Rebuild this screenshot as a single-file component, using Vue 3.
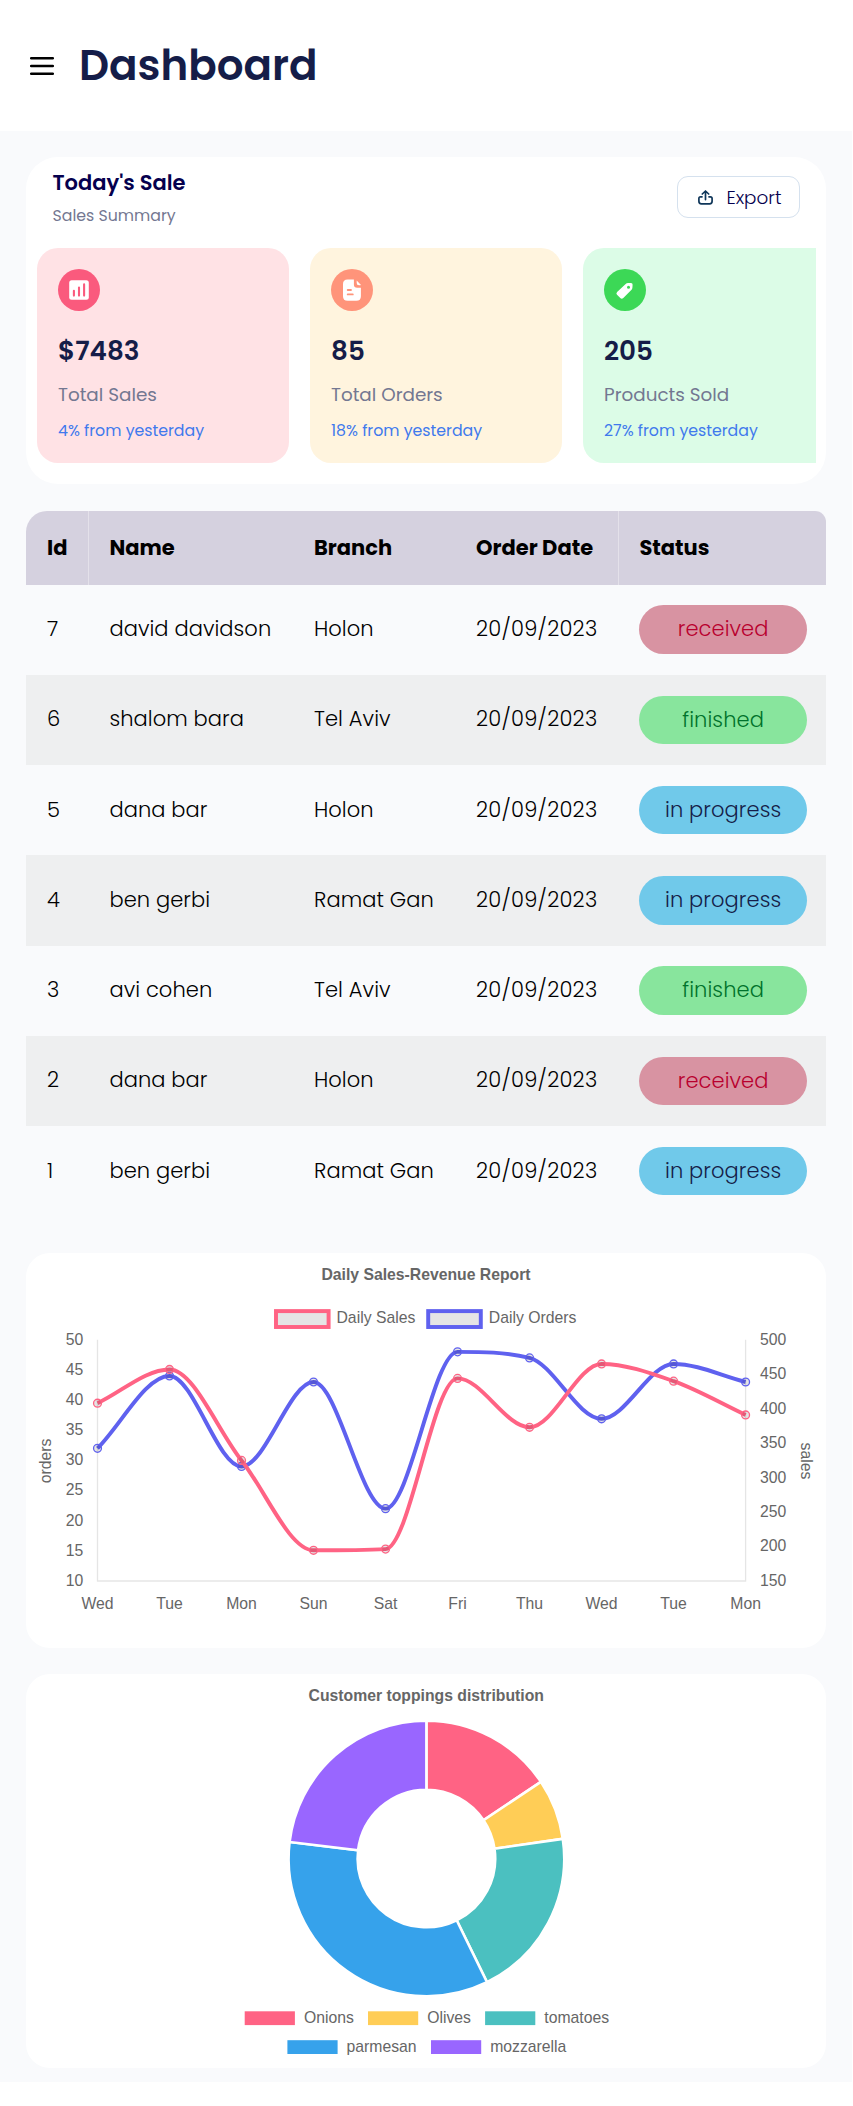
<script setup>
const stats = [
  { kind: 'sales', value: '$7483', label: 'Total Sales', note: '4% from yesterday' },
  { kind: 'orders', value: '85', label: 'Total Orders', note: '18% from yesterday' },
  { kind: 'sold', value: '205', label: 'Products Sold', note: '27% from yesterday' },
]

const rows = [
  [7, 'david davidson', 'Holon', 'received'],
  [6, 'shalom bara', 'Tel Aviv', 'finished'],
  [5, 'dana bar', 'Holon', 'in progress'],
  [4, 'ben gerbi', 'Ramat Gan', 'in progress'],
  [3, 'avi cohen', 'Tel Aviv', 'finished'],
  [2, 'dana bar', 'Holon', 'received'],
  [1, 'ben gerbi', 'Ramat Gan', 'in progress'],
]

// Line chart geometry, in the card's own pixels
const left = 71.5
const right = 719.6
const top = 86.8
const bottom = 328
const step = (right - left) / 9
const days = ['Wed', 'Tue', 'Mon', 'Sun', 'Sat', 'Fri', 'Thu', 'Wed', 'Tue', 'Mon']
const orderTicks = [50, 45, 40, 35, 30, 25, 20, 15, 10]
const salesTicks = [500, 450, 400, 350, 300, 250, 200, 150]
const scale = (v, min, max) => bottom - ((v - min) / (max - min)) * (bottom - top)
const toPoints = (values, min, max) => values.map((v, i) => ({ x: left + i * step, y: scale(v, min, max) }))

// Monotone cubic interpolation through the points
function curve(p) {
  const n = p.length
  const d = []
  for (let i = 0; i < n - 1; i++) d.push((p[i + 1].y - p[i].y) / step)
  const m = p.map((_, i) => {
    if (i === 0) return d[0]
    if (i === n - 1) return d[n - 2]
    return d[i - 1] * d[i] <= 0 ? 0 : (d[i - 1] + d[i]) / 2
  })
  for (let i = 0; i < n - 1; i++) {
    if (d[i] === 0) {
      m[i] = m[i + 1] = 0
      continue
    }
    const a = m[i] / d[i]
    const b = m[i + 1] / d[i]
    const s = a * a + b * b
    if (s > 9) {
      const t = 3 / Math.sqrt(s)
      m[i] = a * t * d[i]
      m[i + 1] = b * t * d[i]
    }
  }
  const h = step / 3
  let out = `M${p[0].x} ${p[0].y}`
  for (let i = 0; i < n - 1; i++) {
    out += `C${p[i].x + h} ${p[i].y + m[i] * h} ${p[i + 1].x - h} ${p[i + 1].y - m[i + 1] * h} ${p[i + 1].x} ${p[i + 1].y}`
  }
  return out
}

const series = [
  { color: '#5f61ef', points: toPoints([32, 44, 29, 43, 22, 48, 47, 36.9, 46, 43], 10, 50) },
  { color: '#ff6384', points: toPoints([408, 457, 325, 194.5, 196.3, 444, 373, 465, 440, 391], 150, 500) },
].map((s) => ({ ...s, d: curve(s.points) }))

const cx = 400.4
const cy = 184.5
function slice(from, to) {
  const at = (deg, r) => {
    const t = (deg * Math.PI) / 180
    return `${cx + r * Math.sin(t)} ${cy - r * Math.cos(t)}`
  }
  const R = 137.8
  const r = 68.8
  return `M${at(from, R)}A${R} ${R} 0 0 1 ${at(to, R)}L${at(to, r)}A${r} ${r} 0 0 0 ${at(from, r)}Z`
}
const slices = [
  { color: '#ff6384', d: slice(0, 56.2) },
  { color: '#ffcd56', d: slice(56.2, 81.8) },
  { color: '#4bc0c0', d: slice(81.8, 153.9) },
  { color: '#36a2eb', d: slice(153.9, 276.9) },
  { color: '#9966ff', d: slice(276.9, 360) },
]
const toppings = [
  { name: 'Onions', color: '#ff6384', x: 218.7, y: 337.3 },
  { name: 'Olives', color: '#ffcd56', x: 342, y: 337.3 },
  { name: 'tomatoes', color: '#4bc0c0', x: 459.1, y: 337.3 },
  { name: 'parmesan', color: '#36a2eb', x: 261.4, y: 366.2 },
  { name: 'mozzarella', color: '#9966ff', x: 405, y: 366.2 },
]
</script>

<template>
  <div class="page">
    <header class="top">
      <svg class="burger" width="24" height="20" viewBox="0 0 24 20">
        <path d="M1.2 2.2H22.8M1.2 10H22.8M1.2 17.8H22.8" stroke="#000" stroke-width="2.5" stroke-linecap="round" />
      </svg>
      <h1>Dashboard</h1>
    </header>

    <main>
      <section class="today">
        <div class="today-head">
          <div>
            <h2>Today's Sale</h2>
            <p class="sub">Sales Summary</p>
          </div>
          <button class="export">
            <svg width="15" height="15" viewBox="0 0 15 15" fill="none" stroke="#0f3659" stroke-width="1.7" stroke-linecap="round" stroke-linejoin="round">
              <path d="M7.5 9.6V1.2M4.3 4L7.5 1L10.7 4" />
              <path d="M4 6.8H2.6Q.9 6.8 .9 8.5V11.3Q.9 13.8 3.4 13.8H11.6Q14.1 13.8 14.1 11.3V8.5Q14.1 6.8 12.4 6.8H11" />
            </svg>
            <span>Export</span>
          </button>
        </div>
        <div class="stats">
          <article v-for="s in stats" :key="s.kind" class="stat" :class="s.kind">
            <svg class="badge" width="42" height="42" viewBox="0 0 42 42">
              <circle class="disc" cx="21" cy="21" r="21" />
              <template v-if="s.kind === 'sales'">
                <rect x="11.2" y="11.2" width="19.6" height="19.6" rx="2.5" fill="#fff" />
                <path d="M15.9 21.7V26.6M21 18.6V26.6M26.1 15.4V26.6" stroke="#fa5a7d" stroke-width="2.1" stroke-linecap="round" />
              </template>
              <template v-else-if="s.kind === 'orders'">
                <path d="M22.9 10.4H16.6Q12 10.4 12 15V27.2Q12 31.8 16.6 31.8H25.3Q29.9 31.8 29.9 27.2V18.7H26.2Q22.9 18.7 22.9 15.4Z" fill="#fff" />
                <path d="M25.7 11.4L30 16Q29.5 16.3 28 16.3Q25.7 16.3 25.7 14Z" fill="#fff" />
                <path d="M16.7 21H20M16.7 25.4H21.8" stroke="#ff947a" stroke-width="1.8" stroke-linecap="round" />
              </template>
              <template v-else>
                <path d="M21.4 15.2Q22.6 14.2 24.2 14.1L27 14Q28.7 14 28.6 15.7L28.4 18.7Q28.3 20.1 27.3 21.1L19.3 29.1Q17.7 30.5 16.3 29.1L13 25.8Q11.7 24.5 13.1 23.1Z" fill="#fff" />
                <circle cx="24.5" cy="18.2" r="1.5" fill="#3cd856" />
              </template>
            </svg>
            <strong>{{ s.value }}</strong>
            <span class="label">{{ s.label }}</span>
            <span class="note">{{ s.note }}</span>
          </article>
        </div>
      </section>

      <table class="orders-table">
        <colgroup>
          <col class="c-id" />
          <col class="c-name" />
          <col class="c-branch" />
          <col class="c-date" />
          <col />
        </colgroup>
        <thead>
          <tr>
            <th>Id</th>
            <th>Name</th>
            <th>Branch</th>
            <th>Order Date</th>
            <th>Status</th>
          </tr>
        </thead>
        <tbody>
          <tr v-for="r in rows" :key="r[0]">
            <td>{{ r[0] }}</td>
            <td>{{ r[1] }}</td>
            <td>{{ r[2] }}</td>
            <td class="date">20/09/2023</td>
            <td class="status"><span class="pill" :class="r[3].replace(' ', '-')">{{ r[3] }}</span></td>
          </tr>
        </tbody>
      </table>

      <section class="chart">
        <svg width="800" height="395" viewBox="0 0 800 395">
          <text class="title" x="400" y="27" text-anchor="middle">Daily Sales-Revenue Report</text>
          <rect x="250" y="58.1" width="52.6" height="15.9" fill="#e5e5e5" stroke="#ff6384" stroke-width="3.94" />
          <text x="310.5" y="70.4">Daily Sales</text>
          <rect x="402.2" y="58.1" width="52.6" height="15.9" fill="#e5e5e5" stroke="#5f61ef" stroke-width="3.94" />
          <text x="462.8" y="70.4">Daily Orders</text>

          <path :d="`M${left} ${top}V${bottom}M${right} ${top}V${bottom + 0.7}M${left - 0.6} ${bottom}H${right}`" stroke="#000" stroke-opacity=".1" stroke-width="1.31" />

          <text v-for="t in orderTicks" :key="'o' + t" x="57.2" :y="scale(t, 10, 50) + 4.9" text-anchor="end">{{ t }}</text>
          <text v-for="t in salesTicks" :key="'s' + t" x="734" :y="scale(t, 150, 500) + 4.9">{{ t }}</text>
          <text v-for="(d, i) in days" :key="i" :x="left + i * step" y="356.3" text-anchor="middle">{{ d }}</text>
          <text transform="translate(24.9 208) rotate(-90)" text-anchor="middle">orders</text>
          <text transform="translate(774.8 208) rotate(90)" text-anchor="middle">sales</text>

          <g v-for="s in series" :key="s.color" :stroke="s.color">
            <path :d="s.d" fill="none" stroke-width="3.94" />
            <circle v-for="p in s.points" :key="p.x" :cx="p.x" :cy="p.y" r="3.94" fill="#000" fill-opacity=".1" stroke-width="1.31" />
          </g>
        </svg>
      </section>

      <section class="chart">
        <svg width="800" height="394" viewBox="0 0 800 394">
          <text class="title" x="400.3" y="27.3" text-anchor="middle">Customer toppings distribution</text>
          <path v-for="s in slices" :key="s.color" :d="s.d" :fill="s.color" stroke="#fff" stroke-width="2.6" />
          <g v-for="t in toppings" :key="t.name">
            <rect :x="t.x" :y="t.y" width="50.2" height="13.8" :fill="t.color" />
            <text :x="t.x + 59.2" :y="t.y + 11.5">{{ t.name }}</text>
          </g>
        </svg>
      </section>
    </main>
  </div>
</template>

<style>
body {
  background: #fff;
}
</style>

<style scoped>
.page {
  width: 852px;
  height: 2082px;
  overflow: hidden;
  background: #f9fafc;
  font-family: Poppins, Inter, sans-serif;
  font-feature-settings: 'cv11';
}
.top {
  box-sizing: border-box;
  width: 853px;
  height: 131px;
  padding-left: 30px;
  display: flex;
  align-items: center;
  gap: 25px;
  background: #fff;
}
h1,
h2,
p {
  margin: 0;
}
h1 {
  font-size: 42px;
  font-weight: 600;
  line-height: 63px;
  color: #151d48;
}
main {
  padding: 26px 26px 0;
}
.today {
  box-sizing: border-box;
  height: 327px;
  padding: 10px 10px 0 11px;
  border-radius: 32px;
  background: #fff;
}
.today-head {
  height: 81px;
  padding: 0 16px 0 15.5px;
  display: flex;
  justify-content: space-between;
}
h2 {
  font-size: 21px;
  font-weight: 600;
  line-height: 31px;
  color: #05004e;
}
.sub {
  margin-top: 6px;
  font-size: 15.75px;
  line-height: 24px;
  color: #737791;
}
.export {
  box-sizing: border-box;
  width: 123px;
  height: 42px;
  margin-top: 9px;
  padding: 0 0 0 20px;
  display: flex;
  align-items: center;
  gap: 13.4px;
  border: 1px solid #d5e1ee;
  border-radius: 11px;
  background: #fff;
  color: #05004e;
  font-family: inherit;
  font-feature-settings: inherit;
  font-size: 18.375px;
  font-weight: 300;
}
.stats {
  display: flex;
  gap: 21px;
  overflow: hidden;
}
.stat {
  box-sizing: border-box;
  flex: 0 0 252px;
  height: 215px;
  padding: 21px 21px 15px;
  display: flex;
  flex-direction: column;
  border-radius: 21px;
}
.badge {
  flex: none;
}
.stat.sales {
  background: #ffe2e5;
}
.stat.orders {
  background: #fff4de;
}
.stat.sold {
  background: #dcfce7;
}
.sales .disc {
  fill: #fa5a7d;
}
.orders .disc {
  fill: #ff947a;
}
.sold .disc {
  fill: #3cd856;
}
strong {
  margin-top: 20px;
  font-size: 26.25px;
  font-weight: 600;
  line-height: 40px;
  color: #151d48;
}
.label {
  margin-top: 10px;
  font-size: 18.375px;
  line-height: 28px;
  color: #737791;
}
.note {
  margin-top: 10px;
  font-size: 15.75px;
  line-height: 24px;
  color: #4079ed;
}
.orders-table {
  width: 800px;
  margin: 27px 0 0;
  table-layout: fixed;
  border-collapse: separate;
  border-spacing: 0;
  font-size: 21px;
  font-weight: 300;
  letter-spacing: 0.07px;
  color: #000;
}
.c-id {
  width: 62.4px;
}
.c-name {
  width: 204.6px;
}
.c-branch {
  width: 162px;
}
.c-date {
  width: 163.4px;
}
th {
  height: 73.7px;
  padding: 0 0 0 21px;
  text-align: left;
  font-size: 21px;
  font-weight: 700;
  letter-spacing: 0;
  background: #d5d1df;
}
th:first-child {
  border-top-left-radius: 21px;
}
th:last-child {
  border-top-right-radius: 11px;
}
th:nth-child(2),
th:nth-child(5) {
  box-shadow: inset 1px 0 #e4e1ea;
}
td {
  box-sizing: border-box;
  height: 90.25px;
  padding: 0 0 2.2px 21px;
}
.date {
  letter-spacing: 0.27px;
}
.status {
  padding-bottom: 0.4px;
}
tbody tr:nth-child(even) td {
  background: #eeeff0;
}
.pill {
  display: block;
  width: 167.5px;
  height: 48.3px;
  line-height: 47.4px;
  border-radius: 25px;
  text-align: center;
}
.received {
  color: #b8002e;
  background: #d893a2;
}
.finished {
  color: #00722b;
  background: #88e59d;
}
.in-progress {
  color: #151d48;
  background: #70c9ea;
}
.chart {
  margin-top: 26px;
  border-radius: 24px;
  background: #fff;
}
.orders-table + .chart {
  margin-top: 36.5px;
}
.chart svg {
  display: block;
}
.chart text {
  font-family: Arial, 'Liberation Sans', sans-serif;
  font-size: 15.75px;
  fill: #666;
}
.chart .title {
  font-weight: 700;
}
</style>
